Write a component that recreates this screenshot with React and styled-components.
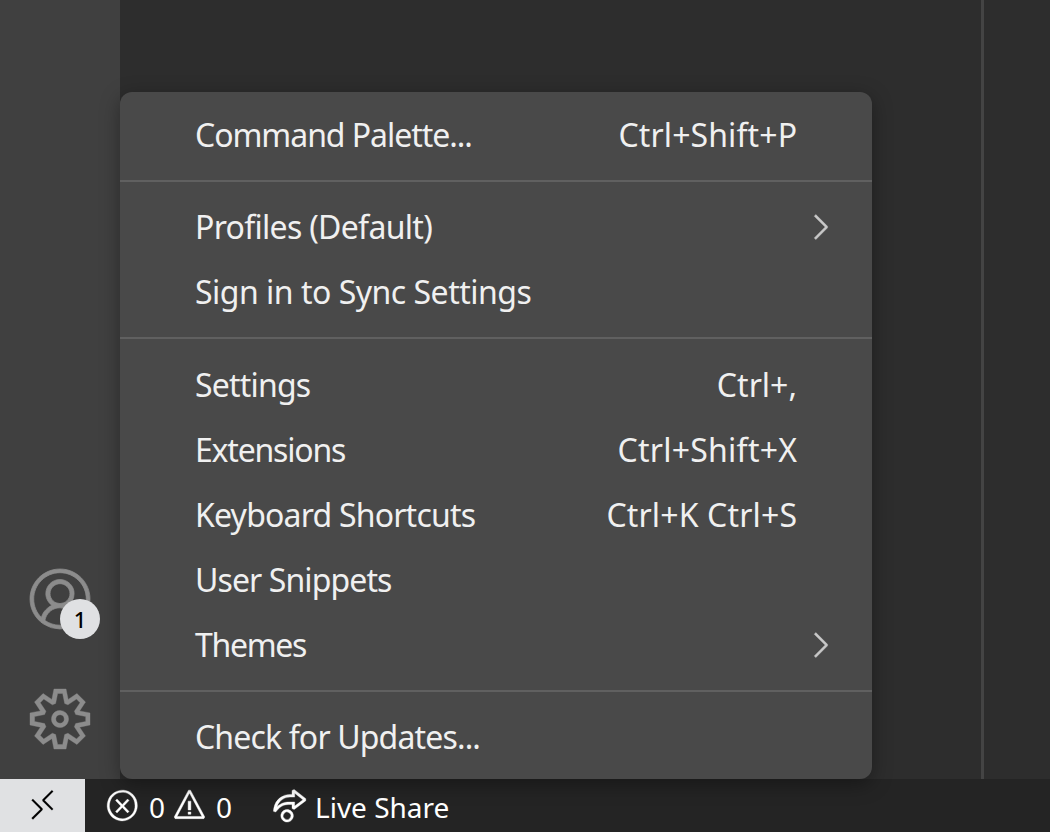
import React from "react";
import styled, { createGlobalStyle } from "styled-components";
import {
  VscAccount,
  VscSettingsGear,
  VscRemote,
  VscError,
  VscWarning,
  VscLiveShare,
  VscChevronRight,
} from "react-icons/vsc";

const GlobalStyle = createGlobalStyle`
  * { box-sizing: border-box; }
  body { margin: 0; background: #2d2d2d; overflow: hidden; }
`;

const Window = styled.div`
  position: relative;
  display: flex;
  flex-direction: column;
  width: 1050px;
  height: 832px;
  overflow: hidden;
  background: #2d2d2d;
  font-family: "Noto Sans", "Open Sans", sans-serif;
`;

const Workbench = styled.div`
  display: flex;
  flex: 1;
`;

const ActivityBar = styled.nav`
  display: flex;
  flex-direction: column;
  justify-content: flex-end;
  width: 120px;
  background: #404040;
`;

const Activity = styled.div`
  position: relative;
  display: flex;
  align-items: center;
  justify-content: center;
  height: 120px;
  color: #8c8c8c;
`;

const Badge = styled.span`
  position: absolute;
  left: 60px;
  top: 60px;
  width: 40px;
  height: 40px;
  border-radius: 50%;
  background: #e0e1e3;
  color: #000;
  font: 500 22px/41px "Noto Sans", sans-serif;
  text-align: center;
`;

const Editor = styled.main`
  flex: 1;
  margin-right: 66px;
  border-right: 3px solid #444;
`;

const StatusBar = styled.footer`
  display: flex;
  height: 53px;
  background: #242424;
  color: #fff;
`;

const Remote = styled.div`
  display: flex;
  align-items: center;
  justify-content: center;
  width: 85px;
  background: #e0e1e3;
  color: #000;
`;

const StatusItem = styled.div`
  display: flex;
  align-items: center;
  margin-left: ${(p) => p.$offset}px;
  font-size: 28px;
  line-height: 53px;
  white-space: nowrap;
`;

const Count = styled.span`
  width: 16px;
  margin: 3px ${(p) => p.$after}px 0 9px;
`;

const StatusLabel = styled.span`
  margin: 3px 0 0 8px;
`;

const Menu = styled.div`
  position: absolute;
  left: 120px;
  top: 92px;
  width: 752px;
  height: 687px;
  padding-top: 10px;
  border-radius: 12px;
  background: #494949;
  box-shadow: 0 5px 20px rgba(0, 0, 0, 0.36);
`;

const MenuItem = styled.div`
  display: flex;
  align-items: center;
  justify-content: space-between;
  height: 65px;
  padding: 0 75px;
  color: #f0f0f0;
  font-size: 32px;
  line-height: 65px;
  white-space: nowrap;
`;

const Label = styled.span`
  letter-spacing: ${(p) => p.$tracking}px;
`;

const Shortcut = styled(Label)`
  margin-right: ${(p) => -p.$tracking}px;
`;

const Arrow = styled.span`
  display: flex;
  margin: 0 -43px 0 0;
  color: #c8c8c8;
`;

const Separator = styled.div`
  height: 2px;
  margin: ${(p) => p.$before}px 0 ${(p) => p.$after}px;
  background: #606060;
`;

const groups = [
  {
    items: [
      { label: "Command Palette...", tracking: -1.05, keys: "Ctrl+Shift+P", keyTracking: 0.1 },
    ],
  },
  {
    before: 13,
    after: 12,
    items: [
      { label: "Profiles (Default)", tracking: -0.7, submenu: true },
      { label: "Sign in to Sync Settings", tracking: -0.5 },
    ],
  },
  {
    before: 13,
    after: 13,
    items: [
      { label: "Settings", tracking: -0.8, keys: "Ctrl+,", keyTracking: 0 },
      { label: "Extensions", tracking: -1.2, keys: "Ctrl+Shift+X", keyTracking: 0.25 },
      { label: "Keyboard Shortcuts", tracking: -0.8, keys: "Ctrl+K Ctrl+S", keyTracking: 0.15 },
      { label: "User Snippets", tracking: -0.9 },
      { label: "Themes", tracking: -1.3, submenu: true },
    ],
  },
  {
    before: 13,
    after: 12,
    items: [{ label: "Check for Updates...", tracking: -0.85 }],
  },
];

export default function App() {
  return (
    <Window>
      <GlobalStyle />
      <Workbench>
        <ActivityBar>
          <Activity>
            <VscAccount size={60} strokeWidth={0.2} overflow="visible" />
            <Badge>1</Badge>
          </Activity>
          <Activity>
            <VscSettingsGear size={60} strokeWidth={0.15} overflow="visible" />
          </Activity>
        </ActivityBar>
        <Editor />
      </Workbench>
      <StatusBar>
        <Remote>
          <VscRemote size={35} strokeWidth={0.1} />
        </Remote>
        <StatusItem $offset={20}>
          <VscError size={35} strokeWidth={0.15} />
          <Count $after={7}>0</Count>
          <VscWarning size={35} strokeWidth={0.2} />
          <Count $after={0}>0</Count>
        </StatusItem>
        <StatusItem $offset={40}>
          <VscLiveShare size={35} strokeWidth={0.25} />
          <StatusLabel>Live Share</StatusLabel>
        </StatusItem>
      </StatusBar>
      <Menu>
        {groups.map((group, i) => (
          <React.Fragment key={i}>
            {i > 0 && <Separator $before={group.before} $after={group.after} />}
            {group.items.map((item) => (
              <MenuItem key={item.label}>
                <Label $tracking={item.tracking}>{item.label}</Label>
                {item.keys && <Shortcut $tracking={item.keyTracking}>{item.keys}</Shortcut>}
                {item.submenu && (
                  <Arrow>
                    <VscChevronRight size={40} strokeWidth={0.2} />
                  </Arrow>
                )}
              </MenuItem>
            ))}
          </React.Fragment>
        ))}
      </Menu>
    </Window>
  );
}
